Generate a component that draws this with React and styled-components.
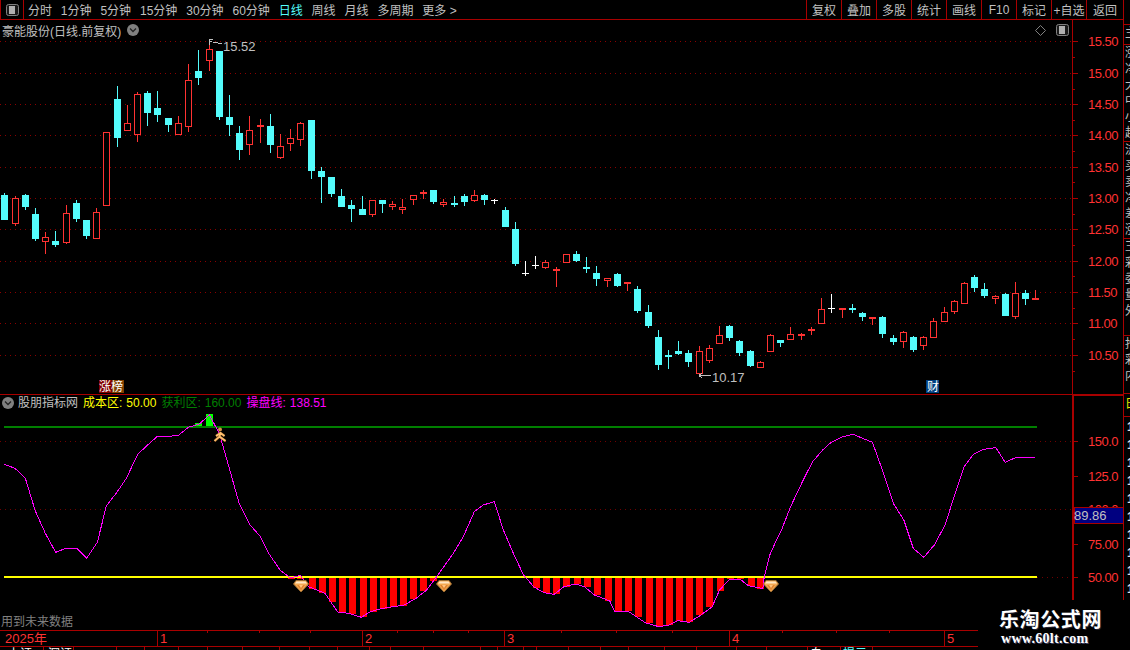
import React from 'react';
import styled, { createGlobalStyle } from 'styled-components';

const SANS = '"Liberation Sans", "Noto Sans CJK SC", sans-serif';
const RULE = '#a80000';
const RED = '#ff3232';
const CYAN = '#54fcfc';
const GREY = '#c0c0c0';

// candles as read from the reference: x, kind, body top, body bottom, wick high, wick low
const CANDLE_GROUPS = [
  {
    ox: 0,
    oy: 30,
    rows: [
      [13, 'c', 495, 570, 489, 570], [46, 'r', 505, 581, 498, 587], [76, 'c', 495, 530, 492, 540],
      [106, 'c', 552, 627, 534, 632], [136, 'r', 622, 635, 606, 671], [166, 'c', 633, 645, 603, 650],
      [199, 'r', 550, 638, 525, 641], [229, 'c', 519, 567, 510, 576], [259, 'c', 570, 618, 570, 627],
      [289, 'r', 547, 626, 534, 626], [319, 'r', 307, 529, 307, 529], [352, 'c', 207, 323, 168, 351],
      [382, 'r', 280, 302, 225, 302], [412, 'r', 193, 316, 186, 336], [442, 'c', 189, 249, 183, 288],
      [472, 'c', 234, 255, 183, 276], [505, 'c', 264, 285, 264, 306], [535, 'r', 280, 314, 258, 316],
      [565, 'r', 151, 290, 102, 306], [595, 'c', 123, 144, 60, 165], [628, 'r', 58, 92, 28, 123],
      [658, 'c', 63, 261, 63, 270], [688, 'c', 261, 285, 195, 318], [718, 'c', 309, 360, 288, 390],
      [748, 'r', 301, 344, 258, 375], [781, 'r', 286, 292, 267, 339], [811, 'c', 288, 345, 252, 369],
      [841, 'r', 349, 384, 312, 387], [871, 'r', 325, 341, 297, 363], [901, 'r', 280, 329, 276, 348],
      [934, 'c', 270, 423, 270, 447], [964, 'c', 423, 441, 411, 519],
    ],
  },
  {
    ox: 320,
    oy: 170,
    rows: [
      [34, 'c', 21, 72, 21, 81], [64, 'c', 78, 111, 57, 111], [94, 'c', 105, 117, 90, 156],
      [127, 'c', 117, 135, 78, 135], [157, 'r', 90, 135, 90, 141], [187, 'c', 90, 102, 90, 129],
      [217, 'r', 102, 111, 93, 120], [247, 'r', 111, 120, 87, 132], [280, 'r', 75, 90, 75, 105],
      [310, 'r', 66, 72, 60, 87], [340, 'c', 60, 96, 60, 102], [370, 'r', 96, 105, 87, 111],
      [403, 'c', 99, 105, 78, 111], [433, 'c', 78, 96, 72, 108], [463, 'r', 75, 93, 60, 96],
      [493, 'c', 75, 90, 72, 105], [522, 'w', 90, 93, 87, 102], [556, 'c', 120, 171, 111, 171],
      [586, 'c', 177, 282, 156, 288], [616, 'w', 310, 313, 273, 318], [646, 'w', 285, 288, 258, 297],
      [676, 'r', 277, 293, 270, 297], [709, 'r', 297, 302, 291, 351], [739, 'r', 253, 278, 253, 278],
      [769, 'c', 252, 273, 243, 276], [799, 'c', 291, 297, 261, 309], [829, 'c', 309, 327, 288, 348],
      [862, 'r', 324, 332, 324, 351], [892, 'c', 312, 348, 309, 351], [922, 'r', 336, 341, 336, 363],
      [952, 'c', 357, 423, 348, 429],
    ],
  },
  {
    ox: 640,
    oy: 270,
    rows: [
      [25, 'c', 126, 168, 105, 174], [55, 'c', 201, 285, 180, 300], [85, 'c', 254, 257, 240, 297],
      [115, 'c', 243, 252, 213, 255], [145, 'c', 249, 276, 240, 291], [178, 'r', 244, 311, 228, 311],
      [208, 'r', 235, 272, 225, 279], [238, 'r', 195, 221, 168, 221], [268, 'c', 168, 204, 165, 213],
      [298, 'c', 213, 249, 210, 258], [331, 'c', 243, 288, 240, 291], [361, 'r', 277, 293, 273, 293],
      [391, 'r', 195, 245, 192, 245], [421, 'c', 210, 219, 210, 231], [451, 'r', 192, 209, 171, 209],
      [484, 'r', 192, 197, 190, 210], [514, 'r', 177, 182, 170, 194], [544, 'r', 118, 161, 84, 163],
      [574, 'w', 114, 117, 72, 129], [607, 'r', 114, 119, 114, 144], [637, 'c', 115, 118, 102, 129],
      [667, 'c', 129, 141, 126, 153], [697, 'r', 141, 147, 141, 165], [727, 'c', 141, 192, 138, 204],
      [760, 'c', 204, 216, 195, 225], [790, 'r', 187, 215, 183, 234], [820, 'c', 201, 240, 198, 246],
      [850, 'r', 202, 227, 198, 240], [880, 'r', 154, 203, 144, 205], [913, 'r', 127, 155, 111, 157],
      [943, 'r', 94, 125, 90, 132], [973, 'r', 40, 101, 36, 103], [1003, 'c', 21, 54, 15, 66],
      [1033, 'c', 57, 78, 39, 84], [1066, 'r', 79, 86, 75, 102], [1096, 'c', 72, 138, 69, 138],
      [1126, 'r', 70, 140, 36, 147], [1156, 'c', 69, 87, 60, 105], [1184, 'r', 85, 87, 60, 87],
    ],
  },
];

const candles = CANDLE_GROUPS.flatMap(({ ox, oy, rows }) =>
  rows.map(([x, kind, top, bot, hi, lo]) => ({
    x: Math.round(ox + x / 3),
    kind,
    top: Math.round(oy + top / 3),
    bot: Math.round(oy + bot / 3),
    hi: Math.round(oy + hi / 3),
    lo: Math.round(oy + lo / 3),
  }))
);

const LINE_LEFT = [
  [13, 163], [45, 175], [76, 205], [106, 303], [136, 370], [167, 427], [197, 415], [230, 415], [260, 445],
  [292, 397], [319, 288], [352, 245], [379, 205], [413, 133], [442, 106], [472, 79], [505, 79], [535, 76],
  [565, 52], [598, 42], [628, 15], [658, 70], [688, 175], [718, 282], [748, 342], [781, 380], [808, 433],
  [841, 481], [871, 504], [901, 496], [925, 530], [975, 550], [1013, 606], [1045, 610], [1085, 622],
  [1105, 608], [1135, 598], [1167, 592], [1213, 585], [1248, 565], [1280, 540], [1310, 500], [1360, 430],
  [1390, 380], [1423, 305], [1450, 285], [1483, 275], [1510, 360], [1540, 430],
];

const LINE_RIGHT = [
  [40, 495], [70, 530], [100, 548], [130, 553], [160, 530], [193, 522], [220, 530], [250, 555], [295, 573],
  [310, 604], [350, 604], [400, 638], [440, 650], [470, 645], [497, 632], [530, 637], [565, 615], [598, 590],
  [620, 540], [650, 507], [680, 507], [705, 527], [748, 536], [752, 500], [770, 430], [805, 355], [830, 290],
  [865, 215], [895, 155], [925, 120], [950, 97], [985, 80], [1015, 73], [1072, 97], [1105, 190], [1135, 282],
  [1165, 330], [1193, 415], [1224, 442], [1255, 405], [1287, 345], [1320, 240], [1343, 170], [1372, 132],
  [1400, 118], [1437, 113], [1465, 157], [1495, 143], [1553, 143],
];

const linePoints = [
  ...LINE_LEFT.map(([x, y]) => `${x / 3},${410 + y / 3}`),
  ...LINE_RIGHT.map(([x, y]) => `${510 + x / 2.958},${410 + y / 3}`),
].join(' ');

const BARS_LEFT = [
  [872, 507], [901, 507], [935, 536], [965, 550], [995, 575], [1025, 608], [1055, 612], [1088, 622], [1118, 606],
  [1148, 598], [1178, 592], [1208, 587], [1240, 567], [1270, 543], [1300, 513],
];

const BARS_RIGHT = [
  [76, 533], [106, 550], [137, 553], [167, 530], [197, 522], [227, 530], [257, 555], [289, 573], [319, 604],
  [349, 604], [378, 622], [410, 638], [440, 650], [470, 645], [500, 632], [530, 637], [560, 615], [590, 590],
  [620, 543], [650, 507], [680, 507], [712, 528], [740, 536],
];

const bars = [
  ...BARS_LEFT.map(([x, b]) => ({ x: Math.round(x / 3), bottom: Math.round(410 + b / 3) })),
  ...BARS_RIGHT.map(([x, b]) => ({ x: Math.round(510 + x / 2.958), bottom: Math.round(410 + b / 3) })),
];

const PRICE_GRID = [41, 73, 104, 135, 167, 198, 229, 261, 292, 323, 355];
const PRICE_LABELS = ['15.50', '15.00', '14.50', '14.00', '13.50', '13.00', '12.50', '12.00', '11.50', '11.00', '10.50'];
const PRICE_MINOR = [57, 89, 120, 151, 182, 214, 245, 276, 308, 339, 371];
const INDICATOR_LABELS = [
  ['150.0', 441], ['125.0', 476], ['100.0', 509], ['75.00', 544], ['50.00', 577],
];

const MONTHS = [['1', 157], ['2', 362], ['3', 504], ['4', 729], ['5', 944]];
const AXIS_TICKS = [207, 259, 310, 397, 433, 468, 561, 616, 672, 782, 836, 889];
const STATUS_TICKS = [
  43, 73, 116, 144, 178, 207, 242, 279, 309, 337, 369, 390, 423, 480, 497, 523, 536, 568, 600, 628, 664, 696,
  736, 766, 807, 840, 872,
];

const TABS = ['分时', '1分钟', '5分钟', '15分钟', '30分钟', '60分钟', '日线', '周线', '月线', '多周期', '更多 >'];
const ACTIONS = ['复权', '叠加', '多股', '统计', '画线', 'F10', '标记', '+自选', '返回'];

const SIDE_SECTIONS = [
  { height: 5, rows: [] },
  { height: 20, rows: ['主'] },
  { height: 97, rows: ['涨', '净', '大', '中', '小', '超'] },
  { height: 97, rows: ['流', '买', '卖', '净', '差', '涨'] },
  { height: 97, rows: ['王', '彩', '委', '量', '外'] },
  { height: 58, rows: ['抢', '彩', '内'] },
];

const SIDE_QUOTES = ['1', '1', '1', '1', '1', '1', '1', '1', '1', '1'];

const GlobalStyle = createGlobalStyle`
  html, body {
    margin: 0;
    padding: 0;
    background: #000;
  }
`;

const Page = styled.div`
  position: relative;
  width: 1130px;
  height: 650px;
  overflow: hidden;
  background: #000;
  font-family: ${SANS};
  font-size: 12px;
  color: ${GREY};
`;

const TopBar = styled.div`
  display: flex;
  justify-content: space-between;
  width: 1124px;
  height: 19px;
  border-bottom: 1px solid ${RULE};
`;

const TabRow = styled.div`
  display: flex;
  align-items: center;
  gap: 8.9px;
`;

const ToggleCell = styled.div`
  display: flex;
  align-items: center;
  justify-content: center;
  width: 22px;
  height: 100%;
  margin-right: -5px;
  border-left: 1px solid ${RULE};
  border-right: 1px solid ${RULE};
`;

const Tab = styled.span`
  white-space: nowrap;
  color: ${(p) => (p.$active ? CYAN : GREY)};
`;

const ActionRow = styled.div`
  display: flex;
  border-right: 1px solid ${RULE};
`;

const Action = styled.span`
  display: flex;
  align-items: center;
  justify-content: center;
  width: 34px;
  white-space: nowrap;
  border-left: 1px solid ${RULE};
  &:last-child {
    width: 36px;
  }
`;

const Body = styled.div`
  display: flex;
  align-items: flex-start;
`;

const ChartColumn = styled.div`
  flex: none;
  width: 1072px;
`;

const PricePanel = styled.div`
  height: 374px;
  border-bottom: 1px solid ${RULE};
`;

const PanelHeader = styled.div`
  display: flex;
  align-items: center;
  justify-content: space-between;
  height: 20px;
  padding: 0 2px;
  box-sizing: border-box;
`;

const TitleGroup = styled.div`
  display: flex;
  align-items: center;
  gap: 6px;
`;

const ToolGroup = styled.div`
  display: flex;
  align-items: center;
  gap: 10px;
  padding-right: 1px;
`;

const Chart = styled.svg`
  display: block;
  overflow: visible;
`;

const LegendRow = styled.div`
  display: flex;
  align-items: center;
  gap: 5px;
  height: 16px;
  padding-left: 2px;
  line-height: 16px;
`;

const LegendTitle = styled.span`
  margin-left: -1px;
  white-space: nowrap;
  color: ${GREY};
`;

const LegendEntry = styled.span`
  display: flex;
  align-items: center;
  gap: 4px;
  white-space: nowrap;
  color: ${(p) => p.$color};
`;

const RightColumn = styled.div`
  display: flex;
  flex: none;
  width: 58px;
  height: 580px;
`;

const AxisColumn = styled.div`
  flex: none;
  width: 51px;
`;

const PriceAxis = styled.div`
  height: 374px;
  border-left: 1px solid ${RULE};
  border-bottom: 2px solid ${RULE};
`;

const IndicatorAxis = styled.div`
  height: 204px;
  border-left: 2px solid ${RULE};
`;

const SideStrip = styled.div`
  flex: none;
  width: 6px;
  height: 580px;
  overflow: hidden;
  border-left: 1px solid ${RULE};
`;

const SideSection = styled.div`
  height: ${(p) => p.$height - 1}px;
  overflow: hidden;
  border-bottom: 1px solid ${RULE};
  line-height: 16px;
  white-space: nowrap;
  padding-left: 1px;
`;

const SideQuoteBlock = styled.div`
  padding: 1px 0 0 3px;
  line-height: 18px;
  font-weight: 700;
  color: #e0e0e0;
`;

const SideHead = styled.div`
  height: 22px;
  padding-left: 1px;
  line-height: 20px;
  color: #e6e600;
  border-bottom: 1px solid ${RULE};
`;

const Watermark = styled.div`
  position: absolute;
  right: 0;
  bottom: 0;
  display: flex;
  flex-direction: column;
  align-items: flex-start;
  box-sizing: border-box;
  width: 152px;
  height: 50px;
  padding: 8px 0 0 21px;
  background: #000;
  color: #fff;
`;

const WatermarkTitle = styled.span`
  font-size: 20px;
  font-weight: 700;
  line-height: 24px;
  letter-spacing: 0.6px;
  text-shadow: 1px 1px 0 #223;
`;

const WatermarkUrl = styled.span`
  margin-left: 2px;
  font-family: "Liberation Serif", serif;
  font-size: 14px;
  font-weight: 700;
  line-height: 14px;
  letter-spacing: 0.3px;
  text-shadow: 1px 1px 0 #446;
`;

const AxisLabel = styled.text`
  fill: ${RED};
  font-family: ${SANS};
  font-size: 13px;
  letter-spacing: -0.5px;
`;

const ChartNote = styled.text`
  fill: ${(p) => p.$color || GREY};
  font-family: ${SANS};
  font-size: ${(p) => p.$size || 12}px;
`;

const ChevronBadge = () => (
  <svg width="12" height="12" viewBox="0 0 12 12">
    <circle cx="6" cy="6" r="6" fill="#808080" />
    <path d="M3 4.5 L6 7.5 L9 4.5" fill="none" stroke="#222" strokeWidth="1.3" />
  </svg>
);

const PaneToggle = () => (
  <svg width="13" height="12" viewBox="0 0 13 12">
    <rect x="0.5" y="0.5" width="12" height="11" rx="2" fill="#1a1a1a" stroke="#808080" />
    <rect x="3" y="2" width="6" height="8" fill="#b0b0b0" />
  </svg>
);

const DiamondOutline = () => (
  <svg width="11" height="11" viewBox="0 0 11 11">
    <path d="M5.5 0.5 L10.5 5.5 L5.5 10.5 L0.5 5.5 Z" fill="none" stroke="#808080" />
  </svg>
);

const Gem = ({ x }) => (
  <g transform={`translate(${x - 8} 580)`} shapeRendering="geometricPrecision">
    <path d="M3 0.5 H13 L15.5 4 L8 12 L0.5 4 Z" fill="#f5a850" stroke="#9a6a30" />
    <path d="M3.5 1.5 H12.5 L14 3.5 H2 Z" fill="#ffe6c4" />
    <path d="M4 5 H12 L8 10.5 Z" fill="#e08430" />
    <path d="M6 5 H10 L8 8 Z" fill="#ffc480" />
  </g>
);

const Runner = () => (
  <g shapeRendering="geometricPrecision">
    <circle cx="220" cy="429.5" r="2" fill="#d89048" />
    <path d="M220.5 432 L219.5 436.5 L214.5 441 M219.5 436.5 L225.5 441 M220.5 433 L216 436 M220.5 433 L224.5 436" fill="none" stroke="#8a5a20" strokeWidth="2.6" />
    <path d="M220.5 432 L219.5 436.5 L214.5 441 M219.5 436.5 L225.5 441 M220.5 433 L216 436 M220.5 433 L224.5 436" fill="none" stroke="#ffc070" strokeWidth="1.6" />
  </g>
);

const Candle = ({ x, kind, top, bot, hi, lo }) => {
  const color = kind === 'c' ? CYAN : kind === 'w' ? '#fff' : RED;
  const height = kind === 'w' ? 1 : Math.max(bot - top, 2);
  return (
    <g>
      <rect x={x} y={hi} width="1" height={Math.max(lo - hi, 1)} fill={color} />
      <rect x={x - 3} y={top} width="7" height={height} fill={color} />
      {kind === 'r' && height > 2 && <rect x={x - 2} y={top + 1} width="5" height={height - 2} fill="#000" />}
    </g>
  );
};

const GridLine = ({ y, x1 = 0, x2 = 1072, color = '#8a0000' }) => (
  <line x1={x1} x2={x2} y1={y + 0.5} y2={y + 0.5} stroke={color} strokeDasharray="1 4" />
);

const PriceChart = () => (
  <Chart width="1072" height="354" viewBox="0 40 1072 354" shapeRendering="crispEdges">
    {PRICE_GRID.map((y) => <GridLine key={y} y={y} />)}
    {candles.map((c) => <Candle key={c.x} {...c} />)}
    <path d="M209.5 45 V39.5 H213 M209.5 41.5 H212" fill="none" stroke={GREY} />
    <path d="M213 43 L215 42 L219 43.5 L222 43" fill="none" stroke={GREY} />
    <ChartNote x="223" y="50.5" $size={13}>15.52</ChartNote>
    <path d="M699 375.5 H711 M699 375.5 L702 373 M699 375.5 L702 378" fill="none" stroke={GREY} />
    <ChartNote x="712" y="381.5" $size={13}>10.17</ChartNote>
    <rect x="99" y="380" width="12.5" height="13" fill="#800000" />
    <rect x="111.5" y="380" width="12.5" height="13" fill="#804000" />
    <ChartNote x="99" y="391" $color="#fff">涨榜</ChartNote>
    <rect x="926" y="380" width="13" height="13" fill="#004080" />
    <ChartNote x="927" y="391" $color="#fff">财</ChartNote>
  </Chart>
);

const IndicatorChart = () => (
  <Chart width="1072" height="219" viewBox="0 411 1072 219" shapeRendering="crispEdges">
    <GridLine y={441} color="#700000" />
    <GridLine y={509} color="#700000" />
    <GridLine y={577} x1={1037} color="#700000" />
    <rect x="195" y="423" width="7" height="4" fill="#00ff00" />
    <rect x="206" y="414" width="7" height="13" fill="#00ff00" />
    {bars.map((b) => (
      <rect key={b.x} x={b.x - 3} y="577" width="7" height={b.bottom - 577} fill="#ff0000" />
    ))}
    <rect x="4" y="426" width="1033" height="2" fill="#007f00" />
    <rect x="4" y="576" width="1033" height="2" fill="#ffff00" />
    <polyline points={linePoints} fill="none" stroke="#ff00ff" />
    <Gem x={301} />
    <Gem x={444} />
    <Gem x={771} />
    <Runner />
    <ChartNote x="1" y="626" $color="#808080">用到未来数据</ChartNote>
  </Chart>
);

const TimeAxis = () => (
  <Chart width="978" height="20" viewBox="0 630 978 20" shapeRendering="crispEdges">
    <line x1="0" x2="978" y1="630.5" y2="630.5" stroke={RULE} />
    <line x1="0" x2="978" y1="646.5" y2="646.5" stroke={RULE} />
    {AXIS_TICKS.map((x) => <line key={x} x1={x + 0.5} x2={x + 0.5} y1="631" y2="633" stroke={RULE} />)}
    {STATUS_TICKS.map((x) => <line key={x} x1={x + 0.5} x2={x + 0.5} y1="647" y2="650" stroke={RULE} />)}
    {MONTHS.map(([label, x]) => (
      <g key={label}>
        <line x1={x + 0.5} x2={x + 0.5} y1="631" y2="646" stroke={RULE} />
        <AxisLabel x={x + 3} y="643">{label}</AxisLabel>
      </g>
    ))}
    <ChartNote x="5" y="643" $color={RED} $size={13}>2025年</ChartNote>
    <ChartNote x="8" y="658" $color="#fff">上证</ChartNote>
    <ChartNote x="48" y="658" $color="#fff">深证</ChartNote>
    <ChartNote x="810" y="658" $color="#fff">自</ChartNote>
    <ChartNote x="843" y="658" $color={CYAN}>提示</ChartNote>
  </Chart>
);

const PriceScale = () => (
  <Chart width="50" height="374" viewBox="1073 20 50 374" shapeRendering="crispEdges">
    {PRICE_GRID.map((y, i) => (
      <g key={y}>
        <line x1="1073" x2="1078" y1={y + 0.5} y2={y + 0.5} stroke={RULE} />
        <AxisLabel x="1088" y={y + 5}>{PRICE_LABELS[i]}</AxisLabel>
      </g>
    ))}
    {PRICE_MINOR.map((y) => <line key={y} x1="1073" x2="1075" y1={y + 0.5} y2={y + 0.5} stroke={RULE} />)}
  </Chart>
);

const IndicatorScale = () => (
  <Chart width="49" height="204" viewBox="1074 396 49 204" shapeRendering="crispEdges">
    {INDICATOR_LABELS.map(([label, y]) => (
      <g key={label}>
        <line x1="1074" x2="1078" y1={y + 0.5} y2={y + 0.5} stroke={RULE} />
        <AxisLabel x="1088" y={y + 5}>{label}</AxisLabel>
      </g>
    ))}
    <rect x="1074" y="507" width="49" height="16" fill="#000080" stroke={RULE} />
    <ChartNote x="1074" y="520" $size={13}>89.86</ChartNote>
  </Chart>
);

const App = () => {
  return (
    <Page>
      <GlobalStyle />
      <TopBar>
        <TabRow>
          <ToggleCell><PaneToggle /></ToggleCell>
          {TABS.map((tab) => <Tab key={tab} $active={tab === '日线'}>{tab}</Tab>)}
        </TabRow>
        <ActionRow>
          {ACTIONS.map((action) => <Action key={action}>{action}</Action>)}
        </ActionRow>
      </TopBar>
      <Body>
        <ChartColumn>
          <PricePanel>
            <PanelHeader>
              <TitleGroup>
                <span>豪能股份(日线.前复权)</span>
                <ChevronBadge />
              </TitleGroup>
              <ToolGroup>
                <DiamondOutline />
                <PaneToggle />
              </ToolGroup>
            </PanelHeader>
            <PriceChart />
          </PricePanel>
          <LegendRow>
            <ChevronBadge />
            <LegendTitle>股朋指标网</LegendTitle>
            <LegendEntry $color="#ffff00"><span>成本区:</span><span>50.00</span></LegendEntry>
            <LegendEntry $color="#007f00"><span>获利区:</span><span>160.00</span></LegendEntry>
            <LegendEntry $color="#ff00ff"><span>操盘线:</span><span>138.51</span></LegendEntry>
          </LegendRow>
          <IndicatorChart />
          <TimeAxis />
        </ChartColumn>
        <RightColumn>
          <AxisColumn>
            <PriceAxis><PriceScale /></PriceAxis>
            <IndicatorAxis><IndicatorScale /></IndicatorAxis>
          </AxisColumn>
          <SideStrip>
            {SIDE_SECTIONS.map((section, i) => (
              <SideSection key={i} $height={section.height}>
                {section.rows.map((row, j) => <div key={j}>{row}</div>)}
              </SideSection>
            ))}
            <SideHead>日</SideHead>
            <SideQuoteBlock>
              {SIDE_QUOTES.map((q, i) => <div key={i}>{q}</div>)}
            </SideQuoteBlock>
          </SideStrip>
        </RightColumn>
      </Body>
      <Watermark>
        <WatermarkTitle>乐淘公式网</WatermarkTitle>
        <WatermarkUrl>www.60lt.com</WatermarkUrl>
      </Watermark>
    </Page>
  );
};

export default App;
